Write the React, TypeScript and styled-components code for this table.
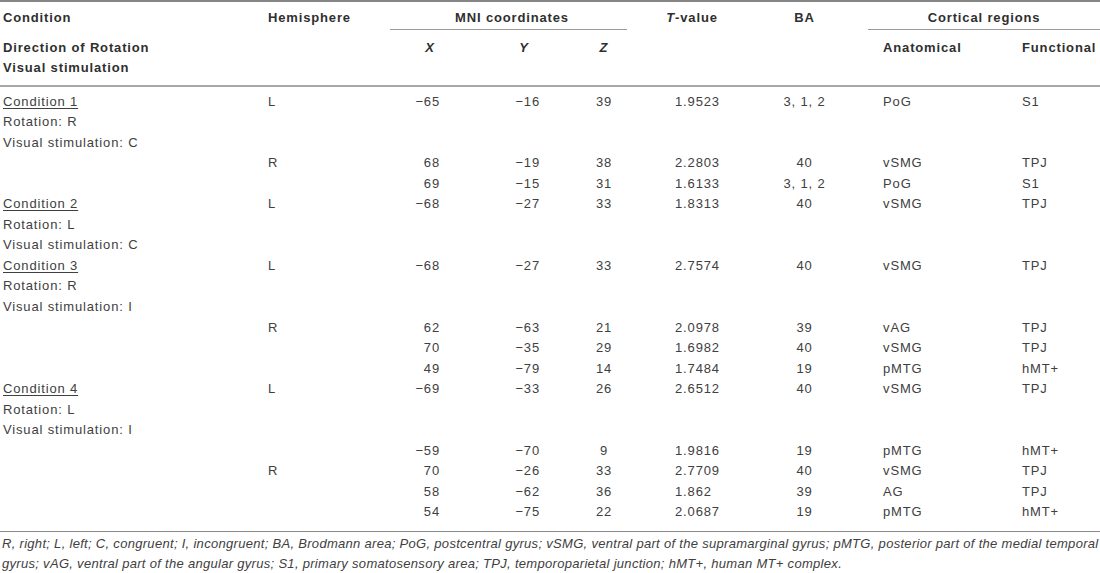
import React from "react";
import styled, { createGlobalStyle } from "styled-components";

const GlobalStyle = createGlobalStyle`
  html, body { margin: 0; padding: 0; background: #ffffff; }
  body {
    font-family: "Liberation Sans", Arial, Helvetica, sans-serif;
    color: #404040;
    overflow: hidden;
  }
`;

type Align = "left" | "right" | "center";
type Col = { w: number; align: Align; pl: number; pr: number };

const COLS: Col[] = [
  { w: 268, align: "left", pl: 3, pr: 0 },
  { w: 122, align: "left", pl: 0, pr: 0 },
  { w: 80, align: "right", pl: 0, pr: 30 },
  { w: 90, align: "right", pl: 0, pr: 20 },
  { w: 67, align: "center", pl: 21, pr: 0 },
  { w: 130, align: "left", pl: 48, pr: 0 },
  { w: 111, align: "center", pl: 0, pr: 16 },
  { w: 154, align: "left", pl: 15, pr: 0 },
  { w: 78, align: "left", pl: 0, pr: 0 },
];

const Page = styled.div`
  width: 1100px;
`;

const Table = styled.table`
  width: 1100px;
  table-layout: fixed;
  border-collapse: separate;
  border-spacing: 0;
  border-top: 2px solid #858585;
  border-bottom: 1.5px solid #8a8a8a;
  font-size: 13px;
  letter-spacing: 0.85px;
`;

const HeadCell = styled.th<{
  $align?: Align;
  $pl?: number;
  $pr?: number;
  $rule?: boolean;
}>`
  font-weight: bold;
  color: #2f2f2f;
  line-height: 20.5px;
  vertical-align: top;
  white-space: nowrap;
  text-align: ${(p) => p.$align ?? "left"};
  padding-left: ${(p) => p.$pl ?? 0}px;
  padding-right: ${(p) => p.$pr ?? 0}px;
  border-bottom: ${(p) => (p.$rule ? "1.5px solid #9a9a9a" : "none")};
`;

const FirstHeadRow = styled.tr`
  & > th {
    padding-top: 6px;
    padding-bottom: 0;
  }
`;

const SecondHeadRow = styled.tr`
  & > th {
    padding-top: 8px;
    padding-bottom: 6px;
    border-bottom: 2px solid #a8a8a8;
  }
`;

const Cell = styled.td<{ $align: Align; $pl: number; $pr: number; $first?: boolean; $last?: boolean }>`
  font-weight: normal;
  line-height: 20.55px;
  vertical-align: top;
  white-space: nowrap;
  text-align: ${(p) => p.$align};
  padding: ${(p) => (p.$first ? 5 : 0)}px ${(p) => p.$pr}px ${(p) => (p.$last ? 8.5 : 0)}px
    ${(p) => p.$pl}px;
`;

const Italic = styled.i`
  font-style: italic;
`;

const CondTitle = styled.span`
  text-decoration: underline;
  text-decoration-thickness: 1px;
  text-underline-offset: 2px;
`;

const CondLine = styled.div``;

const Footnote = styled.p`
  margin: 2px 0 0 0;
  padding-left: 2px;
  font-size: 13px;
  font-style: italic;
  line-height: 20px;
  letter-spacing: 0.3px;
  color: #404040;
  white-space: nowrap;
`;

type Cond = { title: string; rotation: string; visual: string };
type Row = {
  cond?: Cond;
  hemi?: string;
  x: string;
  y: string;
  z: string;
  t: string;
  ba: string;
  anat: string;
  func: string;
};

const ROWS: Row[] = [
  { cond: { title: "Condition 1", rotation: "R", visual: "C" }, hemi: "L", x: "−65", y: "−16", z: "39", t: "1.9523", ba: "3, 1, 2", anat: "PoG", func: "S1" },
  { hemi: "R", x: "68", y: "−19", z: "38", t: "2.2803", ba: "40", anat: "vSMG", func: "TPJ" },
  { x: "69", y: "−15", z: "31", t: "1.6133", ba: "3, 1, 2", anat: "PoG", func: "S1" },
  { cond: { title: "Condition 2", rotation: "L", visual: "C" }, hemi: "L", x: "−68", y: "−27", z: "33", t: "1.8313", ba: "40", anat: "vSMG", func: "TPJ" },
  { cond: { title: "Condition 3", rotation: "R", visual: "I" }, hemi: "L", x: "−68", y: "−27", z: "33", t: "2.7574", ba: "40", anat: "vSMG", func: "TPJ" },
  { hemi: "R", x: "62", y: "−63", z: "21", t: "2.0978", ba: "39", anat: "vAG", func: "TPJ" },
  { x: "70", y: "−35", z: "29", t: "1.6982", ba: "40", anat: "vSMG", func: "TPJ" },
  { x: "49", y: "−79", z: "14", t: "1.7484", ba: "19", anat: "pMTG", func: "hMT+" },
  { cond: { title: "Condition 4", rotation: "L", visual: "I" }, hemi: "L", x: "−69", y: "−33", z: "26", t: "2.6512", ba: "40", anat: "vSMG", func: "TPJ" },
  { x: "−59", y: "−70", z: "9", t: "1.9816", ba: "19", anat: "pMTG", func: "hMT+" },
  { hemi: "R", x: "70", y: "−26", z: "33", t: "2.7709", ba: "40", anat: "vSMG", func: "TPJ" },
  { x: "58", y: "−62", z: "36", t: "1.862", ba: "39", anat: "AG", func: "TPJ" },
  { x: "54", y: "−75", z: "22", t: "2.0687", ba: "19", anat: "pMTG", func: "hMT+" },
];

function renderCells(r: Row, first: boolean, last: boolean) {
  const values: React.ReactNode[] = [
    r.cond ? (
      <>
        <CondLine>
          <CondTitle>{r.cond.title}</CondTitle>
        </CondLine>
        <CondLine>Rotation: {r.cond.rotation}</CondLine>
        <CondLine>Visual stimulation: {r.cond.visual}</CondLine>
      </>
    ) : null,
    r.hemi ?? null,
    r.x,
    r.y,
    r.z,
    r.t,
    r.ba,
    r.anat,
    r.func,
  ];
  return values.map((v, i) => (
    <Cell key={i} $align={COLS[i].align} $pl={COLS[i].pl} $pr={COLS[i].pr} $first={first} $last={last}>
      {v}
    </Cell>
  ));
}

export default function App() {
  return (
    <Page>
      <GlobalStyle />
      <Table>
        <colgroup>
          {COLS.map((c, i) => (
            <col key={i} style={{ width: c.w }} />
          ))}
        </colgroup>
        <thead>
          <FirstHeadRow>
            <HeadCell $pl={3}>Condition</HeadCell>
            <HeadCell>Hemisphere</HeadCell>
            <HeadCell colSpan={3} $align="center" $pl={7} $rule>
              MNI coordinates
            </HeadCell>
            <HeadCell $align="center">
              <Italic>T</Italic>-value
            </HeadCell>
            <HeadCell $align="center" $pr={16}>
              BA
            </HeadCell>
            <HeadCell colSpan={2} $align="center" $rule>
              Cortical regions
            </HeadCell>
          </FirstHeadRow>
          <SecondHeadRow>
            <HeadCell $pl={3}>
              Direction of Rotation
              <br />
              Visual stimulation
            </HeadCell>
            <HeadCell />
            <HeadCell $align="center">
              <Italic>X</Italic>
            </HeadCell>
            <HeadCell $align="center" $pl={18}>
              <Italic>Y</Italic>
            </HeadCell>
            <HeadCell $align="center" $pl={21}>
              <Italic>Z</Italic>
            </HeadCell>
            <HeadCell />
            <HeadCell />
            <HeadCell $pl={15}>Anatomical</HeadCell>
            <HeadCell>Functional</HeadCell>
          </SecondHeadRow>
        </thead>
        <tbody>
          {ROWS.map((r, i) => (
            <tr key={i}>{renderCells(r, i === 0, i === ROWS.length - 1)}</tr>
          ))}
        </tbody>
      </Table>
      <Footnote>
        R, right; L, left; C, congruent; I, incongruent; BA, Brodmann area; PoG, postcentral gyrus; vSMG, ventral
        part of the supramarginal gyrus; pMTG, posterior part of the medial temporal
        <br />
        gyrus; vAG, ventral part of the angular gyrus; S1, primary somatosensory area; TPJ, temporoparietal junction;
        hMT+, human MT+ complex.
      </Footnote>
    </Page>
  );
}
